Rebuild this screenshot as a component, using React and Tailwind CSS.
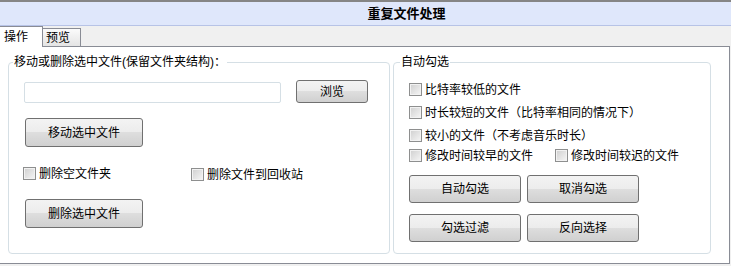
import React from "react";

const Btn = ({ children, className = "" }) => (
  <button
    type="button"
    className={
      "flex items-center justify-center rounded-[3px] border border-[#707070] bg-[linear-gradient(to_bottom,#f3f3f3_0%,#ececec_50%,#dedede_50%,#d0d0d0_100%)] text-[12px] leading-[16px] text-black " +
      className
    }
  >
    {children}
  </button>
);

const Check = ({ label, className = "" }) => (
  <label className={"flex h-[13px] items-center " + className}>
    <span className="h-[13px] w-[13px] shrink-0 border border-[#8e8f8f] bg-[linear-gradient(135deg,#cfcfcf_0%,#f6f6f6_100%)] shadow-[inset_0_0_0_1px_#f2f2f2]" />
    <span className="ml-[3px] whitespace-nowrap text-[12px] leading-[16px] text-black">{label}</span>
  </label>
);

export default function App() {
  return (
    <div className="flex h-[266px] w-[731px] flex-col overflow-hidden bg-[#f0f0f0] font-['Liberation_Sans','Noto_Sans_CJK_SC',sans-serif] text-black">
      {/* Title bar */}
      <div className="flex h-[26px] items-center justify-center border-t-2 border-b border-t-[#858585] border-b-[#b7c3e6] bg-[#dfe7fb] pl-[82px]">
        <span className="text-[13px] font-bold leading-[16px]">重复文件处理</span>
      </div>

      {/* Tabs */}
      <div className="flex h-[20px] items-end">
        <div className="relative z-10 -mb-px flex h-[21px] w-[43px] items-center border-t border-r border-[#898c95] bg-white pl-[4px] text-[12px]">
          操作
        </div>
        <div className="flex h-[18px] w-[38px] items-center border-t border-r border-[#898c95] bg-[linear-gradient(to_bottom,#fbfbfb,#e4e4e4)] pl-[3px] text-[12px]">
          预览
        </div>
      </div>

      {/* Panel */}
      <div className="flex h-[218px] w-[730px] border-t border-r border-b border-[#898c95] bg-white pt-[7px] pl-[8px]">
        {/* Left group */}
        <fieldset className="h-[200px] w-[382px] rounded-[4px] border border-[#d5dfe5] px-0">
          <legend className="ml-[4px] px-[1px] text-[12px] leading-[16px]">移动或删除选中文件(保留文件夹结构)：</legend>
          <div className="flex flex-col pl-[15px]">
            <div className="mt-[11px] flex h-[22px] items-end">
              <input type="text" className="h-[21px] w-[257px] rounded-[2px] border border-[#d5dfe5] bg-white outline-none" />
              <Btn className="ml-[15px] h-[23px] w-[72px]">浏览</Btn>
            </div>
            <Btn className="mt-[15px] ml-px h-[29px] w-[118px]">移动选中文件</Btn>
            <div className="mt-[20px] -ml-px flex">
              <Check label="删除空文件夹" className="w-[168px]" />
              <Check label="删除文件到回收站" className="mt-px" />
            </div>
            <Btn className="mt-[18px] ml-px h-[29px] w-[118px]">删除选中文件</Btn>
          </div>
        </fieldset>

        {/* Right group */}
        <fieldset className="ml-[3px] h-[200px] w-[318px] rounded-[4px] border border-[#d5dfe5] px-0">
          <legend className="ml-[6px] px-[1px] text-[12px] leading-[16px]">自动勾选</legend>
          <div className="flex flex-col pl-[15px]">
            <Check label="比特率较低的文件" className="mt-[13px]" />
            <Check label="时长较短的文件（比特率相同的情况下）" className="mt-[10px]" />
            <Check label="较小的文件（不考虑音乐时长）" className="mt-[10px]" />
            <div className="mt-[7px] flex">
              <Check label="修改时间较早的文件" className="w-[146px]" />
              <Check label="修改时间较迟的文件" />
            </div>
            <div className="mt-[13px] flex gap-[6px]">
              <Btn className="h-[28px] w-[112px]">自动勾选</Btn>
              <Btn className="h-[28px] w-[112px]">取消勾选</Btn>
            </div>
            <div className="mt-[11px] flex gap-[6px]">
              <Btn className="h-[28px] w-[112px]">勾选过滤</Btn>
              <Btn className="h-[28px] w-[112px]">反向选择</Btn>
            </div>
          </div>
        </fieldset>
      </div>
    </div>
  );
}
